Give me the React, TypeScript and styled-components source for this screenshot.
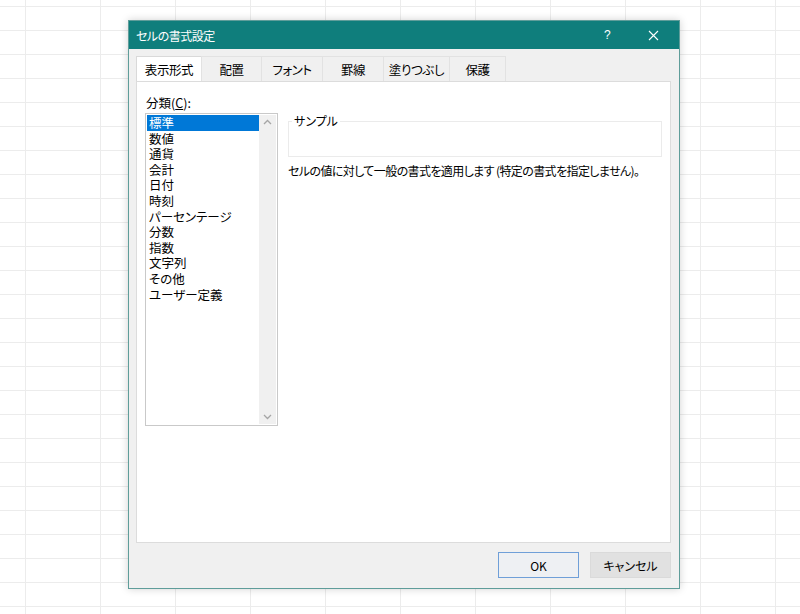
import React from 'react'
import styled, { createGlobalStyle } from 'styled-components'

const GlobalStyle = createGlobalStyle`
  html, body {
    margin: 0;
    padding: 0;
  }
  body {
    font-family: "Noto Sans CJK JP", "Noto Sans", sans-serif;
    font-size: 12px;
    font-feature-settings: "palt";
    color: #000;
  }
`

// spreadsheet cells behind the window
const Sheet = styled.div`
  width: 800px;
  height: 614px;
  box-sizing: border-box;
  padding: 20px 0 0 128px;
  background-color: #fff;
  background-image: linear-gradient(to right, #ececec 1px, transparent 1px),
    linear-gradient(to bottom, #ececec 1px, transparent 1px);
  background-size: 75px 100%, 100% 24px;
  background-position: 25px 0, 0 6px;
  overflow: hidden;
`

const Dialog = styled.div`
  width: 552px;
  height: 569px;
  box-sizing: border-box;
  border: 1px solid #5f9d9a;
  background: #f0f0f0;
  box-shadow: 0 0 8px rgba(0, 0, 0, 0.18);
  display: flex;
  flex-direction: column;
`

const TitleBar = styled.div`
  height: 28px;
  flex: none;
  background: #0f7e7c;
  color: #fff;
  display: flex;
  align-items: center;
  padding-left: 7px;
  font-size: 12px;
  letter-spacing: -0.5px;
`

const Title = styled.div`
  flex: 1;
`

const TitleButton = styled.div<{ $w: number }>`
  width: ${(p) => p.$w}px;
  height: 28px;
  display: flex;
  align-items: center;
  justify-content: center;
  font-family: "Liberation Sans", sans-serif;
  font-size: 12px;
`

const Body = styled.div`
  flex: 1;
  display: flex;
  flex-direction: column;
  padding: 7px 8px 0 7px;
  min-height: 0;
`

const TabStrip = styled.div`
  display: flex;
  height: 25px;
  flex: none;
`

const Tab = styled.div<{ $active?: boolean; $w: number }>`
  box-sizing: border-box;
  width: ${(p) => p.$w}px;
  height: 25px;
  display: flex;
  align-items: center;
  justify-content: center;
  font-size: 12.5px;
  letter-spacing: -0.4px;
  background: ${(p) => (p.$active ? '#fff' : '#f0f0f0')};
  border: 1px solid ${(p) => (p.$active ? '#d9d9d9' : '#e2e2e2')};
  border-bottom: none;
  margin-left: -1px;
  &:first-child {
    margin-left: 0;
  }
`

const Panel = styled.div`
  flex: none;
  height: 462px;
  box-sizing: border-box;
  background: #fff;
  border: 1px solid #dcdcdc;
  display: flex;
  gap: 10px;
  padding: 12px 8px 0 8px;
`

const LeftColumn = styled.div`
  display: flex;
  flex-direction: column;
  width: 133px;
`

const Label = styled.div`
  height: 19px;
  line-height: 18px;
  padding-left: 1px;
  font-size: 12.5px;

  u {
    text-decoration: underline;
  }
`

const ListBox = styled.div`
  height: 313px;
  box-sizing: border-box;
  border: 1px solid #c9c9c9;
  display: flex;
  padding: 1px;
`

const Items = styled.div`
  flex: 1;
  display: flex;
  flex-direction: column;
`

const Item = styled.div<{ $selected?: boolean }>`
  height: 15.6px;
  line-height: 15.6px;
  padding-left: 2px;
  font-size: 12.5px;
  background: ${(p) => (p.$selected ? '#0078d7' : 'transparent')};
  color: ${(p) => (p.$selected ? '#fff' : '#000')};
`

const ScrollBar = styled.div`
  width: 17px;
  background: #f0f0f0;
  display: flex;
  flex-direction: column;
  justify-content: space-between;
  align-items: center;
  padding: 4px 0;
`

const RightColumn = styled.div`
  flex: 1;
  display: flex;
  flex-direction: column;
  padding-top: 20px;
`

const SampleBox = styled.fieldset`
  margin: 0;
  padding: 0;
  height: 43px;
  box-sizing: border-box;
  border: 1px solid #ebebeb;
`

const SampleLegend = styled.legend`
  margin-left: 3px;
  padding: 0 2px;
  font-size: 12px;
  line-height: 14px;
`

const Description = styled.div`
  margin-top: 6px;
  font-size: 12px;
  line-height: 16px;
  letter-spacing: -0.6px;
`

const Footer = styled.div`
  flex: 1;
  display: flex;
  justify-content: flex-end;
  align-items: flex-start;
  gap: 11px;
  padding-top: 9px;
`

const Button = styled.div<{ $default?: boolean }>`
  width: 81px;
  height: 26px;
  box-sizing: border-box;
  display: flex;
  align-items: center;
  justify-content: center;
  font-size: 12px;
  background: ${(p) => (p.$default ? '#eef0f3' : '#e1e1e1')};
  border: 1px solid ${(p) => (p.$default ? '#6f9fd8' : '#dadada')};
`

const Chevron = ({ up }: { up?: boolean }) => (
  <svg width="9" height="6" viewBox="0 0 9 6">
    <path
      d={up ? 'M1 5 L4.5 1.5 L8 5' : 'M1 1 L4.5 4.5 L8 1'}
      fill="none"
      stroke="#a6a6a6"
      strokeWidth="1.3"
    />
  </svg>
)

const tabs: [string, number][] = [
  ['表示形式', 66],
  ['配置', 61],
  ['フォント', 62],
  ['罫線', 62],
  ['塗りつぶし', 67],
  ['保護', 57],
]

const categories = [
  '標準',
  '数値',
  '通貨',
  '会計',
  '日付',
  '時刻',
  'パーセンテージ',
  '分数',
  '指数',
  '文字列',
  'その他',
  'ユーザー定義',
]

export default function App() {
  return (
    <>
      <GlobalStyle />
      <Sheet>
        <Dialog>
          <TitleBar>
            <Title>セルの書式設定</Title>
            <TitleButton $w={40}>?</TitleButton>
            <TitleButton $w={52}>
              <svg width="11" height="11" viewBox="0 0 11 11">
                <path d="M1 1 L10 10 M10 1 L1 10" stroke="#fff" strokeWidth="1.1" />
              </svg>
            </TitleButton>
          </TitleBar>
          <Body>
            <TabStrip>
              {tabs.map(([t, w], i) => (
                <Tab key={t} $w={w} $active={i === 0}>
                  {t}
                </Tab>
              ))}
            </TabStrip>
            <Panel>
              <LeftColumn>
                <Label>
                  分類(<u>C</u>):
                </Label>
                <ListBox>
                  <Items>
                    {categories.map((c, i) => (
                      <Item key={c} $selected={i === 0}>
                        {c}
                      </Item>
                    ))}
                  </Items>
                  <ScrollBar>
                    <Chevron up />
                    <Chevron />
                  </ScrollBar>
                </ListBox>
              </LeftColumn>
              <RightColumn>
                <SampleBox>
                  <SampleLegend>サンプル</SampleLegend>
                </SampleBox>
                <Description>
                  セルの値に対して一般の書式を適用します (特定の書式を指定しません)。
                </Description>
              </RightColumn>
            </Panel>
            <Footer>
              <Button $default>OK</Button>
              <Button>キャンセル</Button>
            </Footer>
          </Body>
        </Dialog>
      </Sheet>
    </>
  )
}
